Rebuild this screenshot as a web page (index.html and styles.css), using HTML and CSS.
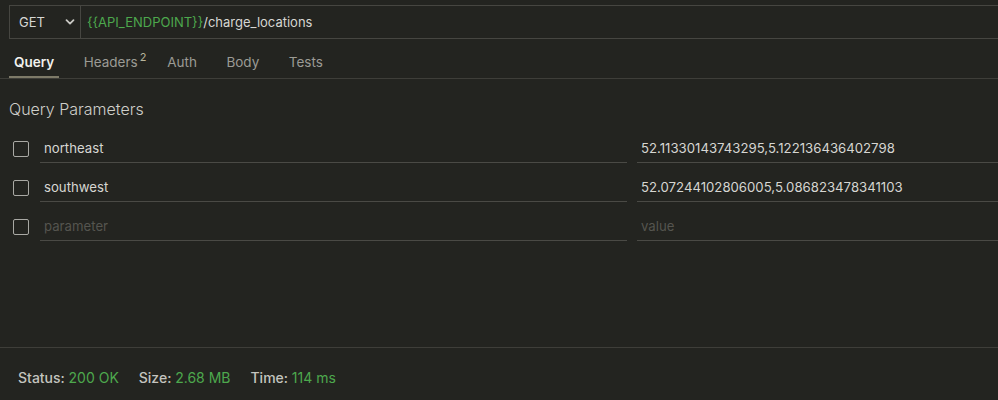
FILE: index.html
```html
<!DOCTYPE html>
<html>
<head>
<meta charset="utf-8">
<link rel="stylesheet" href="styles.css">
</head>
<body>
<div class="page">
  <div class="main">
    <div class="urlbar">
      <div class="method">
        <span>GET</span>
        <svg class="chev" width="10" height="8" viewBox="0 0 10 8"><path d="M1.5 2.2 L5 5.6 L8.5 2.2" fill="none" stroke="#c9c9c4" stroke-width="1.8" stroke-linecap="round" stroke-linejoin="round"/></svg>
      </div>
      <div class="url"><span class="var">{{API_ENDPOINT}}</span>/charge_locations</div>
    </div>
    <div class="tabs">
      <div class="tab active">Query</div>
      <div class="tab">Headers<sup class="badge">2</sup></div>
      <div class="tab">Auth</div>
      <div class="tab">Body</div>
      <div class="tab">Tests</div>
    </div>
    <h2 class="title">Query Parameters</h2>
    <div class="params">
      <div class="row">
        <span class="check"></span>
        <div class="cell key">northeast</div>
        <div class="cell val">52.11330143743295,5.122136436402798</div>
      </div>
      <div class="row">
        <span class="check"></span>
        <div class="cell key">southwest</div>
        <div class="cell val">52.07244102806005,5.086823478341103</div>
      </div>
      <div class="row">
        <span class="check"></span>
        <div class="cell key ph">parameter</div>
        <div class="cell val ph">value</div>
      </div>
    </div>
  </div>
  <div class="footer">
    <span class="stat">Status: <b>200 OK</b></span>
    <span class="stat">Size: <b>2.68 MB</b></span>
    <span class="stat">Time: <b>114 ms</b></span>
  </div>
</div>
</body>
</html>
```
FILE: styles.css
```css
html, body {
  margin: 0;
  padding: 0;
  background: #232420;
}
body {
  font-family: Inter, "Liberation Sans", sans-serif;
  color: #d6d6d2;
}
.page {
  height: 400px;
  display: flex;
  flex-direction: column;
}
.main {
  flex: 1;
}
.urlbar {
  margin: 5px 0 0 9px;
  height: 32px;
  display: flex;
  border: 1px solid #464641;
  border-right: none;
  font-size: 13px;
}
.method {
  width: 61px;
  padding-left: 9px;
  border-right: 1px solid #464641;
  display: flex;
  align-items: center;
  justify-content: space-between;
  color: #d6d6d2;
}
.chev {
  margin-right: 5px;
}
.url {
  display: flex;
  align-items: center;
  padding-left: 6px;
  color: #d6d6d2;
}
.var {
  color: #4da84d;
}
.tabs {
  display: flex;
  gap: 19.5px;
  height: 39px;
  padding-left: 9px;
  border-bottom: 1px solid #3e3e39;
  font-size: 13.5px;
}
.tab {
  position: relative;
  padding: 0 5px 8px;
  display: flex;
  align-items: flex-end;
  color: #9b9b95;
}
.tab.active {
  color: #f2f2ee;
  font-weight: 600;
  box-shadow: inset 0 -2px 0 #7d7a68;
}
.badge {
  position: absolute;
  left: 61px;
  top: 11px;
  font-size: 11px;
  color: #b8b59c;
}
.title {
  margin: 0;
  padding: 20px 0 0 9px;
  height: 24px;
  font-size: 16px;
  font-weight: 300;
  color: #cfcfca;
}
.params {
  padding-top: 1px;
}
.row {
  display: flex;
  align-items: stretch;
  height: 39px;
  padding-left: 13px;
}
.check {
  width: 14px;
  height: 14px;
  border: 1px solid #a9a9a4;
  border-radius: 2px;
  margin-top: 17px;
  margin-right: 11px;
  flex: none;
}
.cell {
  border-bottom: 1px solid #4a4a45;
  font-size: 13.2px;
  padding-left: 4px;
  display: flex;
  align-items: flex-end;
  padding-bottom: 6px;
  box-sizing: border-box;
}
.key {
  width: 587px;
  margin-right: 10px;
}
.val {
  flex: 1;
}
.ph {
  color: #55554f;
}
.footer {
  height: 53px;
  box-sizing: border-box;
  border-top: 1px solid #3e3e39;
  display: flex;
  align-items: flex-start;
  gap: 20px;
  padding: 21px 0 0 18px;
  font-size: 14px;
}
.stat {
  color: #c4c4bf;
  font-weight: 500;
}
.stat b {
  color: #4da84d;
  font-weight: 400;
}
```
